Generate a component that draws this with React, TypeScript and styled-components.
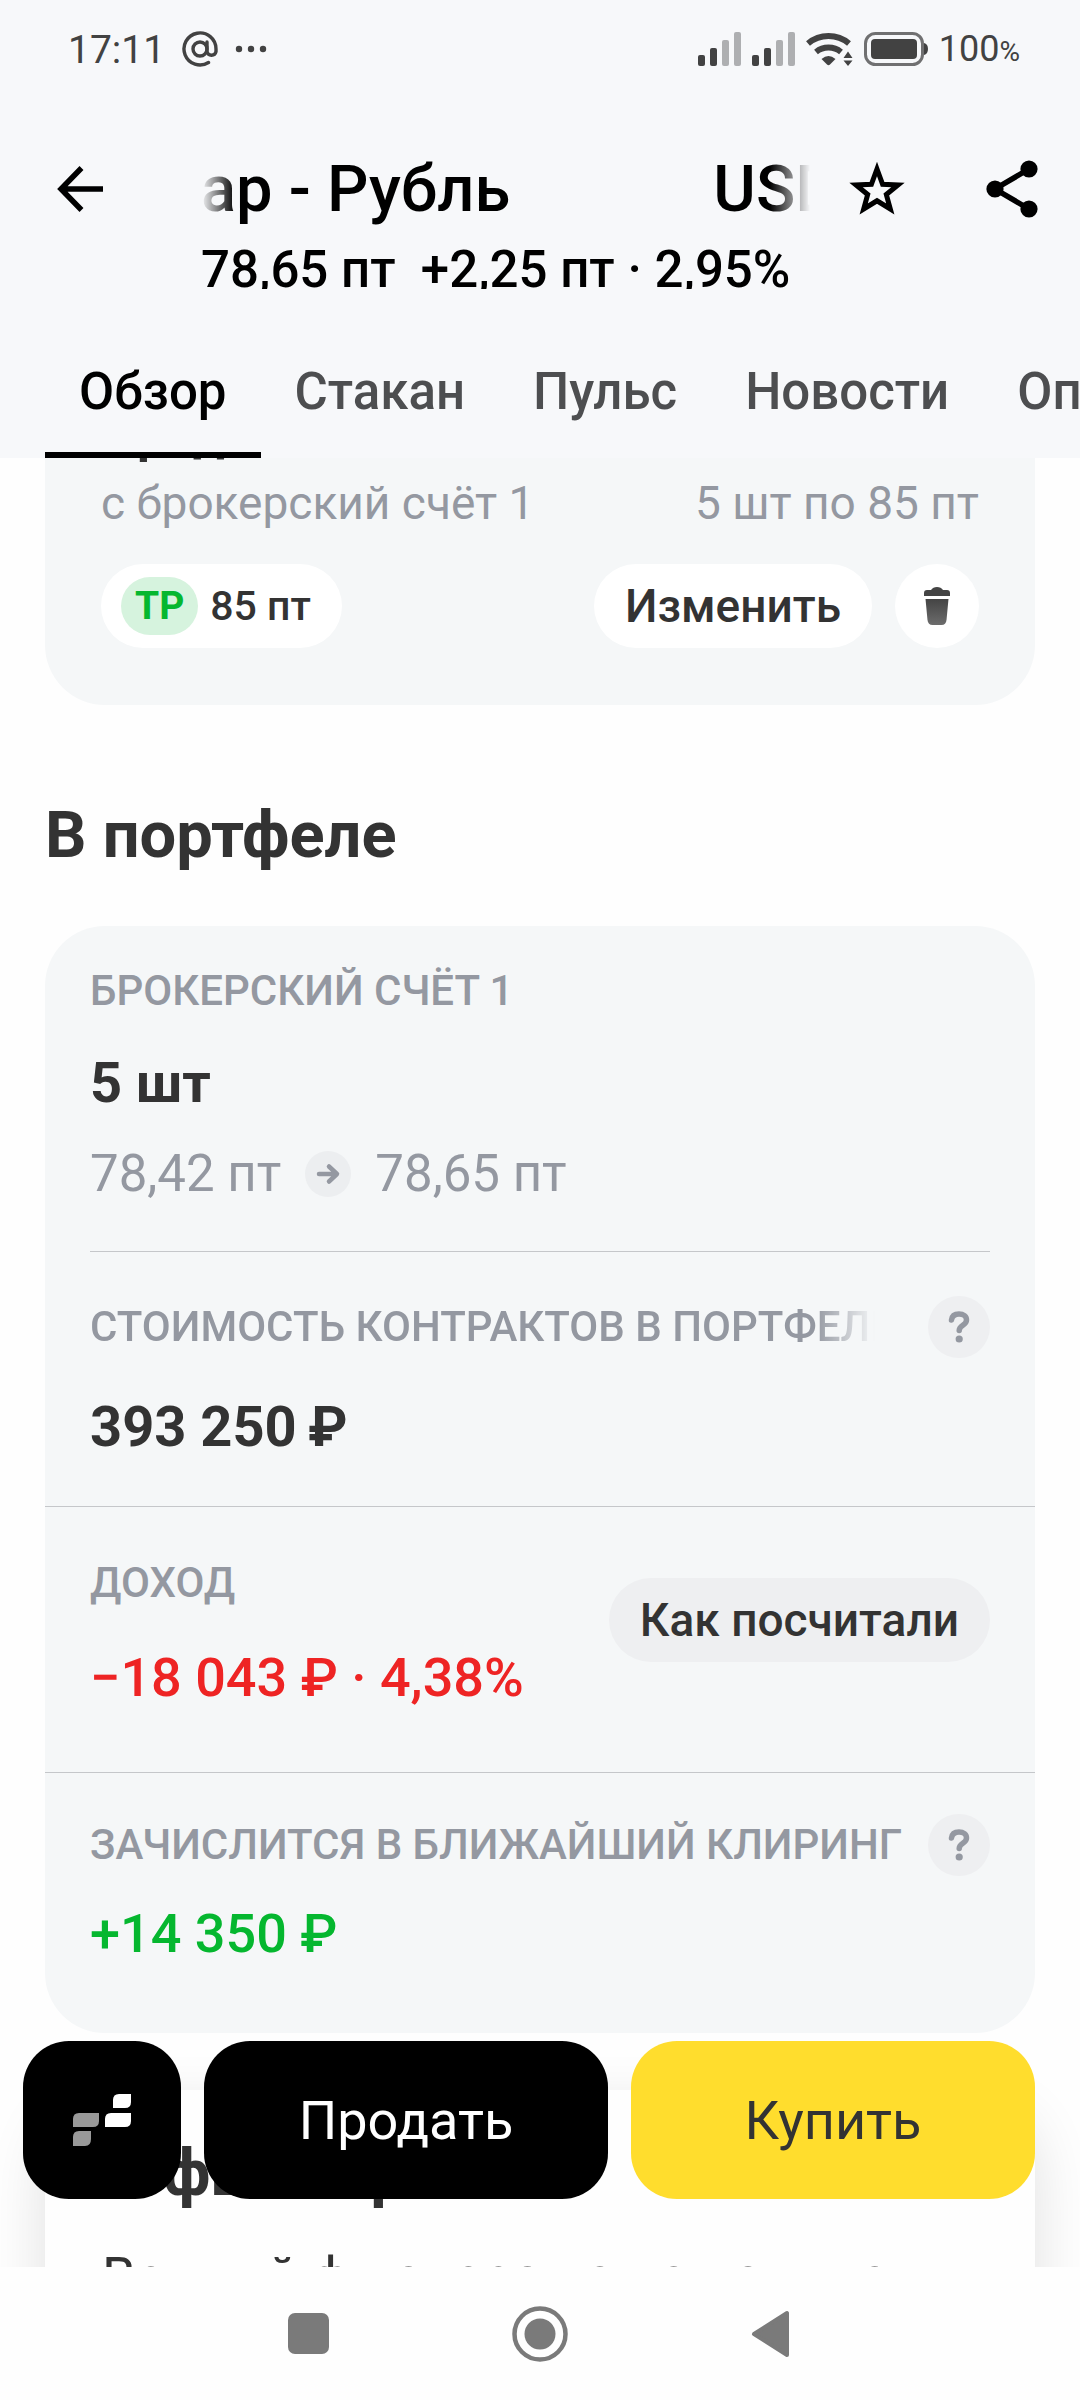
import React from 'react';
import styled, { createGlobalStyle, css } from 'styled-components';

const GlobalStyle = createGlobalStyle`
  * {
    box-sizing: border-box;
  }

  body {
    margin: 0;
    background: #fefefe;
    color: #333;
    font-family: Roboto, 'Noto Sans', sans-serif;
  }

  button {
    font-family: inherit;
    border: none;
    padding: 0;
    background: none;
    color: inherit;
    cursor: pointer;
  }

  h1, h2, h3, p {
    margin: 0;
  }

  svg {
    display: block;
    flex: none;
  }
`;

const Screen = styled.div`
  height: 100vh;
  display: flex;
  flex-direction: column;
  overflow: hidden;
`;

const Header = styled.header`
  flex: none;
  background: #f7f8fa;
`;

const StatusBar = styled.div`
  height: 98px;
  padding: 0 60px 0 68px;
  display: flex;
  align-items: center;
  justify-content: space-between;
  color: #424242;
`;

const StatusGroup = styled.div<{ $gap: number }>`
  display: flex;
  align-items: center;
  gap: ${({ $gap }) => $gap}px;
`;

const Clock = styled.span`
  font-size: 39px;
  line-height: 48px;
  padding-top: 2px;
`;

const BatteryLevel = styled.span`
  font-size: 36px;
  line-height: 44px;
  padding-top: 2px;

  small {
    font-size: 28px;
  }
`;

const AppBar = styled.div`
  display: flex;
  align-items: flex-start;
  padding: 52px 42px 0 57px;
`;

const IconButton = styled.button`
  height: 78px;
  display: flex;
  align-items: center;
`;

const Instrument = styled.div`
  flex: 1;
  min-width: 0;
  margin: 0 39px 0 97px;
`;

/* running title, faded on both sides */
const Ticker = styled.h1`
  display: flex;
  gap: 203px;
  overflow: hidden;
  white-space: nowrap;
  color: #000;
  font-size: 65px;
  font-weight: 500;
  line-height: 78px;
  mask-image: linear-gradient(to right, transparent, #000 34px, #000 calc(100% - 40px), transparent);
`;

const Quote = styled.p`
  height: 61px;
  overflow: hidden;
  color: #000;
  font-size: 51px;
  font-weight: 500;
  line-height: 84px;
  white-space: pre;
`;

const Actions = styled.div`
  display: flex;
  gap: 81px;
`;

const Tabs = styled.nav`
  display: flex;
  padding: 71px 0 0 45px;
  overflow: hidden;
`;

const Tab = styled.button<{ $active?: boolean }>`
  flex: none;
  padding: 0 34px 28px;
  border-bottom: 6px solid ${({ $active }) => ($active ? '#000' : 'transparent')};
  color: ${({ $active }) => ($active ? '#000' : '#4d4e50')};
  font-size: 51px;
  font-weight: 500;
  line-height: 64px;
`;

const Content = styled.main`
  position: relative;
  flex: 1;
  min-height: 0;
  overflow: hidden;
`;

/* the list is scrolled a little under the header */
const Scrolled = styled.div`
  margin-top: -113px;
  padding: 0 45px;
`;

const Card = styled.section`
  background: #f5f7f8;
  border-radius: 60px;
`;

const OrderCard = styled(Card)`
  padding: 57px 56px;
`;

const OrderTitle = styled.h3`
  font-size: 51px;
  font-weight: 700;
  line-height: 64px;
  margin-bottom: 9px;
`;

const Row = styled.div`
  display: flex;
  align-items: center;
  justify-content: space-between;
`;

const OrderInfo = styled(Row)`
  margin-bottom: 33px;
  color: #9498a1;
  font-size: 46px;
  line-height: 56px;
`;

const TargetPill = styled.div`
  display: flex;
  align-items: center;
  gap: 12px;
  height: 84px;
  padding: 0 31px 0 20px;
  border-radius: 42px;
  background: #fff;
  font-size: 41px;
  font-weight: 500;
`;

const TargetBadge = styled.span`
  padding: 0 14px;
  border-radius: 29px;
  background: #d6f3de;
  color: #05b72f;
  font-size: 39px;
  font-weight: 700;
  line-height: 58px;
`;

const OrderActions = styled.div`
  display: flex;
  gap: 23px;
`;

const PillButton = styled.button<{ $muted?: boolean }>`
  flex: none;
  height: 84px;
  padding: 0 31px;
  border-radius: 42px;
  background: ${({ $muted }) => ($muted ? '#eeeff1' : '#fff')};
  color: #333;
  font-size: 46px;
  font-weight: 500;
`;

const RoundButton = styled.button`
  width: 84px;
  height: 84px;
  border-radius: 50%;
  background: #fff;
  display: flex;
  align-items: center;
  justify-content: center;
`;

const SectionTitle = styled.h2`
  margin: 91px 0 52px;
  font-size: 65px;
  font-weight: 700;
  line-height: 78px;
`;

const Block = styled.div<{ $top: number; $bottom: number }>`
  padding: ${({ $top }) => $top}px 45px ${({ $bottom }) => $bottom}px;
`;

const Divider = styled.hr<{ $inset?: boolean }>`
  height: 1px;
  border: none;
  margin: 0 ${({ $inset }) => ($inset ? 45 : 0)}px;
  background: #c5c7ca;
`;

const Label = styled.div<{ $fade?: boolean }>`
  color: #9498a1;
  font-size: 42px;
  font-weight: 500;
  line-height: 50px;
  white-space: nowrap;
  overflow: hidden;

  ${({ $fade }) =>
    $fade &&
    css`
      margin-right: 28px;
      mask-image: linear-gradient(to right, #000 calc(100% - 60px), transparent);
    `}
`;

const tones = {
  normal: '#333',
  loss: '#ee2424',
  profit: '#05b72f',
};

const Value = styled.div<{ $gap: number; $tone?: keyof typeof tones }>`
  margin-top: ${({ $gap }) => $gap}px;
  color: ${({ $tone = 'normal' }) => tones[$tone]};
  font-size: ${({ $tone = 'normal' }) => ($tone === 'normal' ? 56 : 54)}px;
  font-weight: ${({ $tone = 'normal' }) => ($tone === 'normal' ? 700 : 500)};
  line-height: 66px;
  white-space: nowrap;
`;

const PriceMove = styled.div`
  display: flex;
  align-items: center;
  gap: 24px;
  margin-top: 27px;
  color: #9498a1;
  font-size: 51px;
  line-height: 62px;
`;

const HintRow = styled(Row)`
  gap: 25px;
`;

const HintButton = styled.button`
  flex: none;
  width: 62px;
  height: 62px;
  border-radius: 50%;
  background: #eeeff1;
  display: flex;
  align-items: center;
  justify-content: center;
`;

const IncomeRow = styled(Row)`
  align-items: flex-start;

  ${PillButton} {
    margin-top: 20px;
  }
`;

const AboutCard = styled.section`
  margin-top: 57px;
  padding: 44px 57px 57px;
  border-radius: 60px;
  background: #fefefe;
  box-shadow: 0 20px 60px rgba(0, 0, 0, 0.12);

  h2 {
    font-size: 65px;
    line-height: 78px;
  }

  p {
    margin-top: 32px;
    font-size: 54px;
    line-height: 66px;
  }
`;

const TradeBar = styled.div`
  position: absolute;
  left: 23px;
  right: 45px;
  bottom: 68px;
  display: flex;
  gap: 23px;
`;

const TradeButton = styled.button<{ $buy?: boolean }>`
  flex: 1;
  height: 158px;
  border-radius: 46px;
  background: ${({ $buy }) => ($buy ? '#ffdd2d' : '#000')};
  color: ${({ $buy }) => ($buy ? '#333' : '#fff')};
  font-size: 54px;
`;

const TerminalButton = styled(TradeButton)`
  flex: none;
  width: 158px;
  display: flex;
  align-items: center;
  justify-content: center;
`;

const SystemNav = styled.footer`
  flex: none;
  height: 133px;
  display: flex;
  align-items: center;
  justify-content: center;
  gap: 183px;
  padding-right: 2px;
  background: #fefefe;
`;

const AtIcon = () => (
  <svg width="36" height="36" viewBox="0 0 36 36" fill="none" stroke="#424242" strokeWidth="3.4" strokeLinecap="round">
    <circle cx="18" cy="18" r="7" />
    <path d="M25 11v9.500a4.600 4.600 0 0 0 9 .2V18a16 16 0 1 0-7.500 13.500" />
  </svg>
);

const DotsIcon = () => (
  <svg width="32" height="8" viewBox="0 0 32 8" fill="#424242">
    <circle cx="4" cy="4" r="3.200" />
    <circle cx="16" cy="4" r="3.200" />
    <circle cx="28" cy="4" r="3.200" />
  </svg>
);

const SignalIcon = () => (
  <svg width="43" height="34" viewBox="0 0 43 34" fill="#424242">
    <rect x="0" y="23" width="7" height="11" rx="2" />
    <rect x="12" y="16" width="7" height="18" rx="2" />
    <rect x="24" y="8" width="7" height="26" rx="2" fill="#aeafb1" />
    <rect x="36" y="0" width="7" height="34" rx="2" fill="#aeafb1" />
  </svg>
);

const WifiIcon = () => (
  <svg width="47" height="34" viewBox="0 0 47 34">
    <g fill="none" stroke="#424242" strokeWidth="6">
      <path d="M2 11.500a32 32 0 0 1 41 0" />
      <path d="M10 20a20 20 0 0 1 25 0" />
    </g>
    <path d="M15.500 27q7-6 14 0l-5.500 5.500q-1.500 1.300-3 0z" fill="#424242" />
    <path d="M37.500 26l4.500-6.500 4.500 6.500zM37.500 28.500h9L42 34z" fill="#424242" />
  </svg>
);

const BatteryIcon = () => (
  <svg width="64" height="34" viewBox="0 0 64 34">
    <rect x="1.500" y="1.500" width="57" height="31" rx="10" fill="none" stroke="#707071" strokeWidth="3" />
    <rect x="7" y="7" width="46" height="20" rx="4" fill="#424242" />
    <path d="M60 11q4 1 4 6t-4 6z" fill="#424242" />
  </svg>
);

const BackIcon = () => (
  <svg width="47" height="46" viewBox="0 0 47 46" fill="none" stroke="#000" strokeWidth="5.500">
    <path d="M24.500 2L4 23l20.500 21M4 23h42" />
  </svg>
);

const StarIcon = () => (
  <svg width="56" height="54" viewBox="0 0 56 54">
    <path
      d="M28 7l5.600 15.300 15.400.6L37.300 32.500 41.300 47 28 38.800 14.700 47l4-14.500L7 22.900l15.400-.6z"
      fill="none"
      stroke="#000"
      strokeWidth="5"
    />
  </svg>
);

const ShareIcon = () => (
  <svg width="52" height="58" viewBox="0 0 52 58">
    <path d="M43 9L9 29l34 20" fill="none" stroke="#000" strokeWidth="5.500" />
    <circle cx="43" cy="9" r="8.600" />
    <circle cx="9" cy="29" r="8.600" />
    <circle cx="43" cy="49" r="8.600" />
  </svg>
);

const TrashIcon = () => (
  <svg width="28" height="38" viewBox="0 0 28 38">
    <defs>
      <linearGradient id="bin" x1="0" y1="0" x2="0" y2="1">
        <stop offset="0" stopColor="#444" />
        <stop offset="1" stopColor="#6c6c6c" />
      </linearGradient>
    </defs>
    <path d="M1 9V6q0-3 3-3h4q2-3 6-3t6 3h4q3 0 3 3v3z" fill="#444" />
    <path d="M2.500 12h23L23.500 33q-.5 5-5 5h-9q-4.500 0-5-5z" fill="url(#bin)" />
  </svg>
);

const MoveIcon = () => (
  <svg width="46" height="46" viewBox="0 0 46 46">
    <circle cx="23" cy="23" r="23" fill="#eceef0" />
    <path
      d="M14 23h17M24 15.500l8 7.500-8 7.500"
      fill="none"
      stroke="#9498a1"
      strokeWidth="4.500"
      strokeLinecap="round"
      strokeLinejoin="round"
    />
  </svg>
);

const HintIcon = () => (
  <svg width="22" height="32" viewBox="0 0 22 32">
    <path
      d="M3.500 9c.5-4 3.500-6 7.500-6 4.500 0 7.500 2.400 7.500 6 0 5.500-7.300 5-7.300 10.500"
      fill="none"
      stroke="#9498a1"
      strokeWidth="5.500"
      strokeLinecap="round"
    />
    <circle cx="11.200" cy="28" r="3.600" fill="#9498a1" />
  </svg>
);

const TerminalIcon = () => (
  <svg width="58" height="52" viewBox="0 0 58 52" fill="#fff">
    <path d="M46 0h12v8q0 6-6 6H40V6q0-6 6-6z" />
    <path d="M38 19h20v8q0 6-6 6H32v-8q0-6 6-6z" />
    <path d="M6 19h20v8q0 6-6 6H0v-8q0-6 6-6z" fill="#999" />
    <path d="M6 37h12v8q0 7-6 7H0v-9q0-6 6-6z" fill="#999" />
  </svg>
);

const App: React.FC = () => {
  return (
    <Screen>
      <GlobalStyle />
      <Header>
        <StatusBar>
          <StatusGroup $gap={17}>
            <Clock>17:11</Clock>
            <AtIcon />
            <DotsIcon />
          </StatusGroup>
          <StatusGroup $gap={11}>
            <SignalIcon />
            <SignalIcon />
            <WifiIcon />
            <BatteryIcon />
            <BatteryLevel>
              100<small>%</small>
            </BatteryLevel>
          </StatusGroup>
        </StatusBar>
        <AppBar>
          <IconButton aria-label="Назад">
            <BackIcon />
          </IconButton>
          <Instrument>
            <Ticker>
              <span>ар - Рубль</span>
              <span>USD</span>
            </Ticker>
            <Quote>{'78,65 пт  +2,25 пт · 2,95%'}</Quote>
          </Instrument>
          <Actions>
            <IconButton aria-label="В избранное">
              <StarIcon />
            </IconButton>
            <IconButton aria-label="Поделиться">
              <ShareIcon />
            </IconButton>
          </Actions>
        </AppBar>
        <Tabs>
          <Tab $active>Обзор</Tab>
          <Tab>Стакан</Tab>
          <Tab>Пульс</Tab>
          <Tab>Новости</Tab>
          <Tab>Операции</Tab>
        </Tabs>
      </Header>

      <Content>
        <Scrolled>
          <OrderCard>
            <OrderTitle>Продажа</OrderTitle>
            <OrderInfo>
              <span>с брокерский счёт 1</span>
              <span>5 шт по 85 пт</span>
            </OrderInfo>
            <Row>
              <TargetPill>
                <TargetBadge>TP</TargetBadge>
                85 пт
              </TargetPill>
              <OrderActions>
                <PillButton>Изменить</PillButton>
                <RoundButton aria-label="Удалить">
                  <TrashIcon />
                </RoundButton>
              </OrderActions>
            </Row>
          </OrderCard>

          <SectionTitle>В портфеле</SectionTitle>
          <Card>
            <Block $top={40} $bottom={46}>
              <Label>БРОКЕРСКИЙ СЧЁТ 1</Label>
              <Value $gap={34}>5 шт</Value>
              <PriceMove>
                <span>78,42 пт</span>
                <MoveIcon />
                <span>78,65 пт</span>
              </PriceMove>
            </Block>
            <Divider $inset />
            <Block $top={44} $bottom={46}>
              <HintRow>
                <Label $fade>СТОИМОСТЬ КОНТРАКТОВ В ПОРТФЕЛЕ</Label>
                <HintButton aria-label="Подсказка">
                  <HintIcon />
                </HintButton>
              </HintRow>
              <Value $gap={36}>{'393 250\u2009₽'}</Value>
            </Block>
            <Divider />
            <Block $top={51} $bottom={61}>
              <IncomeRow>
                <div>
                  <Label>ДОХОД</Label>
                  <Value $gap={37} $tone="loss">
                    −18 043 ₽ · 4,38%
                  </Value>
                </div>
                <PillButton $muted>Как посчитали</PillButton>
              </IncomeRow>
            </Block>
            <Divider />
            <Block $top={41} $bottom={66}>
              <HintRow>
                <Label>ЗАЧИСЛИТСЯ В БЛИЖАЙШИЙ КЛИРИНГ</Label>
                <HintButton aria-label="Подсказка">
                  <HintIcon />
                </HintButton>
              </HintRow>
              <Value $gap={25} $tone="profit">
                +14 350 ₽
              </Value>
            </Block>
          </Card>

          <AboutCard>
            <h2>О фьючерсе</h2>
            <p>Вечный фьючерс на валютную пару</p>
          </AboutCard>
        </Scrolled>

        <TradeBar>
          <TerminalButton aria-label="Терминал">
            <TerminalIcon />
          </TerminalButton>
          <TradeButton>Продать</TradeButton>
          <TradeButton $buy>Купить</TradeButton>
        </TradeBar>
      </Content>

      <SystemNav>
        <IconButton aria-label="Недавние">
          <svg width="41" height="41" viewBox="0 0 41 41">
            <rect width="41" height="41" rx="7" fill="#7a7a7a" />
          </svg>
        </IconButton>
        <IconButton aria-label="Домой">
          <svg width="56" height="56" viewBox="0 0 56 56">
            <circle cx="28" cy="28" r="25.500" fill="none" stroke="#7a7a7a" strokeWidth="4.500" />
            <circle cx="28" cy="28" r="15.500" fill="#7a7a7a" />
          </svg>
        </IconButton>
        <IconButton aria-label="Назад">
          <svg width="40" height="48" viewBox="0 0 40 48">
            <path
              d="M36 3v42L3 24z"
              fill="#7a7a7a"
              stroke="#7a7a7a"
              strokeWidth="4"
              strokeLinejoin="round"
            />
          </svg>
        </IconButton>
      </SystemNav>
    </Screen>
  );
};

export default App;
